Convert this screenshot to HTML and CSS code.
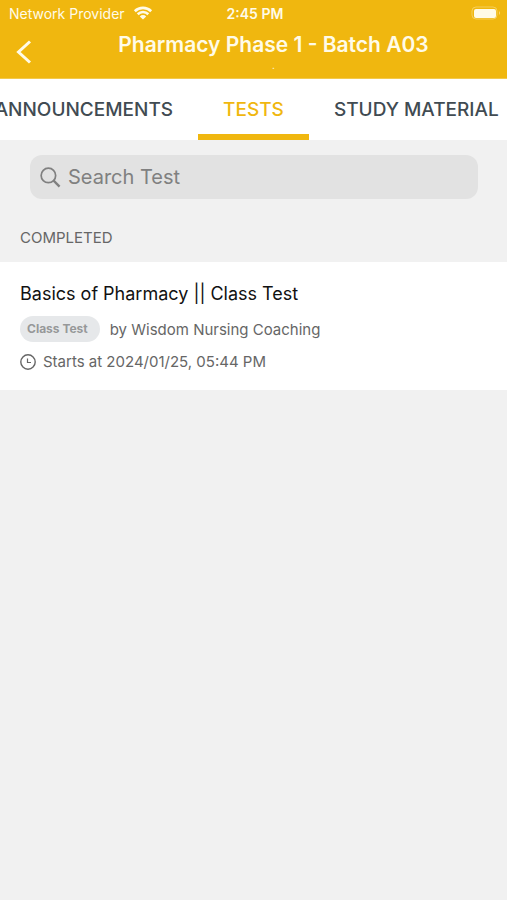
FILE: index.html
```html
<!DOCTYPE html>
<html lang="en">
<head>
<meta charset="utf-8">
<meta name="viewport" content="width=device-width, initial-scale=1">
<title>Pharmacy Phase 1 - Batch A03</title>
<link rel="stylesheet" href="styles.css">
</head>
<body>
<header class="header">
  <div class="status">
    <div class="carrier">
      <span>Network Provider</span>
      <svg class="wifi" viewBox="0 0 20 14" aria-hidden="true">
        <path d="M1.8 5.2a11.8 11.8 0 0 1 16.4 0M4.7 8.2a7.6 7.6 0 0 1 10.6 0" fill="none" stroke="currentColor" stroke-width="2.6"/>
        <path d="M6.8 10.4a4.6 4.6 0 0 1 6.4 0L10 13.6z" fill="currentColor"/>
      </svg>
    </div>
    <time class="clock">2:45 PM</time>
    <svg class="battery" viewBox="0 0 30 14" aria-hidden="true">
      <rect x="1" y="1" width="25" height="12" rx="4" fill="none" stroke="currentColor" opacity=".35"/>
      <rect x="3" y="3" width="22" height="9" rx="2" fill="currentColor"/>
      <path d="M28 5v4q2-2 0-4z" fill="currentColor" opacity=".5"/>
    </svg>
  </div>
  <div class="navbar">
    <button class="back" type="button" aria-label="Back">
      <svg viewBox="0 0 16 26" aria-hidden="true"><path d="M14 2.500 2.500 13 14 23.500" fill="none" stroke="currentColor" stroke-width="3"/></svg>
    </button>
    <div class="heading">
      <h1>Pharmacy Phase 1 - Batch A03</h1>
      <p>.</p>
    </div>
  </div>
</header>
<nav class="tabs">
  <a class="tab" href="#announcements">ANNOUNCEMENTS</a>
  <a class="tab active" href="#tests" aria-current="page">TESTS</a>
  <a class="tab" href="#material">STUDY MATERIAL</a>
</nav>
<main>
  <label class="search">
    <svg viewBox="0 0 22 22" aria-hidden="true"><circle cx="8.800" cy="8.800" r="7.600" fill="none" stroke="currentColor" stroke-width="1.800"/><path d="M14 14l6.500 6.500" stroke="currentColor" stroke-width="2.400"/></svg>
    <input type="text" placeholder="Search Test" aria-label="Search Test">
  </label>
  <h2 class="section">COMPLETED</h2>
  <article class="test">
    <h3>Basics of Pharmacy || Class Test</h3>
    <div class="meta">
      <span class="badge">Class Test</span>
      <span>by Wisdom Nursing Coaching</span>
    </div>
    <div class="starts">
      <svg viewBox="0 0 16 16" aria-hidden="true"><circle cx="8" cy="8" r="7.200" fill="none" stroke="currentColor" stroke-width="1.400"/><path d="M7.500 4.500v4h3.500" fill="none" stroke="currentColor" stroke-width="1.200"/></svg>
      <span>Starts at 2024/01/25, 05:44 PM</span>
    </div>
  </article>
</main>
</body>
</html>
```

FILE: styles.css
```css
* { box-sizing: border-box; }
body {
  margin: 0;
  background: #f1f1f1;
  color: #666;
  font-family: Inter, "Liberation Sans", sans-serif;
  overflow-x: hidden;
}
h1, h2, h3, p { margin: 0; font-weight: 400; }
.header {
  background: #f0b70f;
  color: #fffbe8;
  padding-bottom: 8px;
  border-bottom: 1px solid #f3c94b;
}
.status {
  display: grid;
  grid-template-columns: 1fr auto 1fr;
  align-items: center;
  height: 26px;
  padding: 0 6px 0 9px;
  font-size: 14px;
}
.carrier { display: flex; align-items: center; gap: 8px; white-space: nowrap; }
.wifi { width: 20px; height: 14px; }
.clock { font-weight: 600; }
.battery { width: 30px; height: 14px; justify-self: end; }
.navbar {
  display: grid;
  grid-template-columns: 48px 1fr 8px;
  align-items: center;
  padding-top: 4px;
}
.back {
  display: flex;
  border: 0;
  padding: 4px 16px 0;
  background: none;
  color: inherit;
}
.back svg { width: 16px; height: 26px; }
.heading { text-align: center; }
.heading h1 { font-size: 21px; line-height: 30px; font-weight: 600; }
.heading p { font-size: 10px; line-height: 10px; }
.tabs {
  display: grid;
  grid-template-columns: 1fr auto 1fr;
  height: 61px;
  background: #fff;
  overflow: hidden;
}
.tab {
  min-width: 0;
  padding: 0 25px;
  border-bottom: 6px solid transparent;
  color: #414b52;
  font-size: 19px;
  line-height: 62px;
  height: 61px;
  font-weight: 500;
  text-decoration: none;
  white-space: nowrap;
}
.tab:first-child { display: flex; justify-content: flex-end; }
.tab.active { color: #f0b70f; border-color: #f0b70f; }
.search {
  display: flex;
  align-items: center;
  gap: 7px;
  height: 44px;
  margin: 15px 29px 0 30px;
  padding: 0 10px;
  border-radius: 12px;
  background: #e2e2e2;
  color: #808080;
}
.search svg { width: 21px; height: 21px; flex: none; }
.search input {
  flex: 1;
  min-width: 0;
  padding: 0;
  border: 0;
  outline: 0;
  background: none;
  color: #333;
  font: 20px Inter, "Liberation Sans", sans-serif;
}
.search input::placeholder { color: #808080; opacity: 1; }
.section { padding: 29px 20px 14px; font-size: 15px; line-height: 20px; }
.test { padding: 18px 20px; background: #fff; font-size: 15px; }
.test h3 { color: #111; font-size: 18px; line-height: 28px; }
.meta { display: flex; align-items: center; gap: 10px; margin-top: 8px; }
.badge {
  padding: 0 12px 0 7px;
  border-radius: 13px;
  background: #e6e8ea;
  color: #969899;
  font-size: 12px;
  line-height: 26px;
  font-weight: 700;
}
.starts { display: flex; align-items: center; gap: 7px; margin-top: 10px; line-height: 20px; }
.starts svg { width: 16px; height: 16px; }
```
